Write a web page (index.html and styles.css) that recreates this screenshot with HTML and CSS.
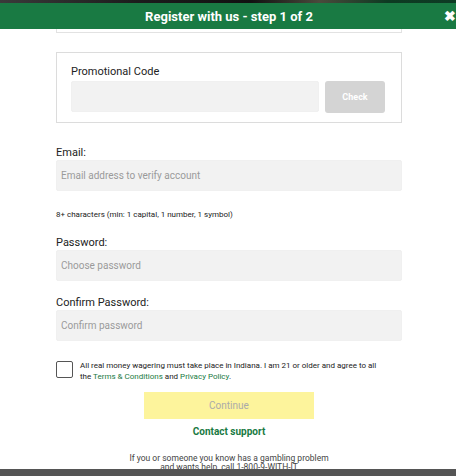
FILE: index.html
```html
<!DOCTYPE html>
<html lang="en">
  <head>
    <meta charset="UTF-8" />
    <title>Register</title>
    <link rel="stylesheet" href="styles.css">
  </head>
  <body>
    <div class="backdrop"></div>
    <div class="modal">
      <div class="modal-head">
        <span class="modal-title">Register with us - step 1 of 2</span>
        <span class="modal-close">&#10006;</span>
      </div>
      <div class="modal-body">
        <div class="prev-box"></div>

        <div class="promo">
          <label class="promo-label">Promotional Code</label>
          <div class="promo-row">
            <input class="field promo-input" type="text" />
            <button class="btn-check">Check</button>
          </div>
        </div>

        <label class="label label-email">Email:</label>
        <input class="field" type="text" placeholder="Email address to verify account" />

        <p class="hint">8+ characters (min: 1 capital, 1 number, 1 symbol)</p>

        <label class="label label-password">Password:</label>
        <input class="field" type="password" placeholder="Choose password" />

        <label class="label label-confirm">Confirm Password:</label>
        <input class="field" type="password" placeholder="Confirm password" />

        <div class="terms">
          <span class="checkbox"></span>
          <p class="terms-text">All real money wagering must take place in Indiana. I am 21 or older and agree to all the <a href="#">Terms &amp; Conditions</a> and <a href="#">Privacy Policy</a>.</p>
        </div>

        <button class="btn-continue">Continue</button>
        <a class="support" href="#">Contact support</a>

        <p class="gamble">If you or someone you know has a gambling problem<br>and wants help, call 1-800-9-WITH-IT</p>
      </div>
    </div>
    <div class="footer-bar"></div>
  </body>
</html>
```

FILE: styles.css
```css
* {
  box-sizing: border-box;
}

html, body {
  margin: 0;
  height: 476px;
  overflow: hidden;
  background: #fff;
  font-family: Roboto, "Liberation Sans", sans-serif;
  color: #222;
}

body {
  display: flex;
  flex-direction: column;
}

/* photo strip behind the modal */
.backdrop {
  height: 3px;
  background: linear-gradient(90deg, #3a3a3a 0%, #1c1c1c 30%, #111 55%, #4a4a3c 70%, #0d3a22 85%, #0e3b24 100%);
}

.modal {
  flex: 1;
  display: flex;
  flex-direction: column;
  overflow: hidden;
}

.modal-head {
  height: 26px;
  background: #197a43;
  color: #fff;
  display: flex;
  align-items: center;
  justify-content: center;
  position: relative;
}
.modal-title {
  font-size: 13px;
  font-weight: 700;
  margin-left: 2px;
}
.modal-close {
  position: absolute;
  right: 0;
  top: 6px;
  font-size: 14px;
  font-weight: 700;
  line-height: 1;
}

.modal-body {
  padding: 0 54px 0 56px;
  display: flex;
  flex-direction: column;
}

.prev-box {
  height: 4px;
  border: 1px solid #e2e2e2;
  border-top: 0;
}

.promo {
  margin-top: 19px;
  border: 1px solid #dcdcdc;
  padding: 12px 16px 9px 14px;
}
.promo-label {
  display: block;
  font-size: 11px;
  color: #222;
  margin-bottom: 3px;
}
.promo-row {
  display: flex;
  gap: 6px;
}
.promo-input {
  flex: 1;
}
.btn-check {
  width: 60px;
  height: 32px;
  border: 0;
  border-radius: 3px;
  background: #d4d4d4;
  color: #fff;
  font-family: inherit;
  font-size: 9px;
  font-weight: 700;
}

.label {
  font-size: 11px;
  color: #222;
  margin: 13px 0 1px;
}
.label-email {
  margin-top: 23px;
}
.label-password {
  margin-top: 17px;
}
.label-confirm {
  margin-top: 15px;
}

.field {
  height: 31px;
  border: 1px solid #f0f0f0;
  border-radius: 2px;
  background: #f2f2f2;
  padding: 0 4px;
  font-family: inherit;
  font-size: 10px;
  color: #222;
  width: 100%;
}
.field::placeholder {
  color: #9a9a9a;
}

.hint {
  margin: 19px 0 0;
  font-size: 8px;
  color: #222;
}

.terms {
  display: flex;
  gap: 7px;
  margin-top: 20px;
}
.checkbox {
  flex: none;
  width: 17px;
  height: 17px;
  border: 1px solid #555;
  border-radius: 2px;
}
.terms-text {
  margin: 0;
  max-width: 300px;
  font-size: 8px;
  line-height: 10.5px;
  color: #222;
}
.terms-text a {
  color: #197a43;
  text-decoration: none;
}

.btn-continue {
  align-self: center;
  width: 170px;
  height: 27px;
  margin-top: 10px;
  border: 0;
  background: #fdf49c;
  color: #aaa;
  font-family: inherit;
  font-size: 10px;
}

.support {
  align-self: center;
  margin-top: 7px;
  font-size: 10px;
  font-weight: 700;
  color: #197a43;
  text-decoration: none;
}

.gamble {
  margin: 17px 0 0;
  text-align: center;
  font-size: 8.5px;
  line-height: 9px;
  color: #444;
}

.footer-bar {
  position: absolute;
  left: 0;
  right: 0;
  top: 469px;
  height: 7px;
  background: #555;
}
```
